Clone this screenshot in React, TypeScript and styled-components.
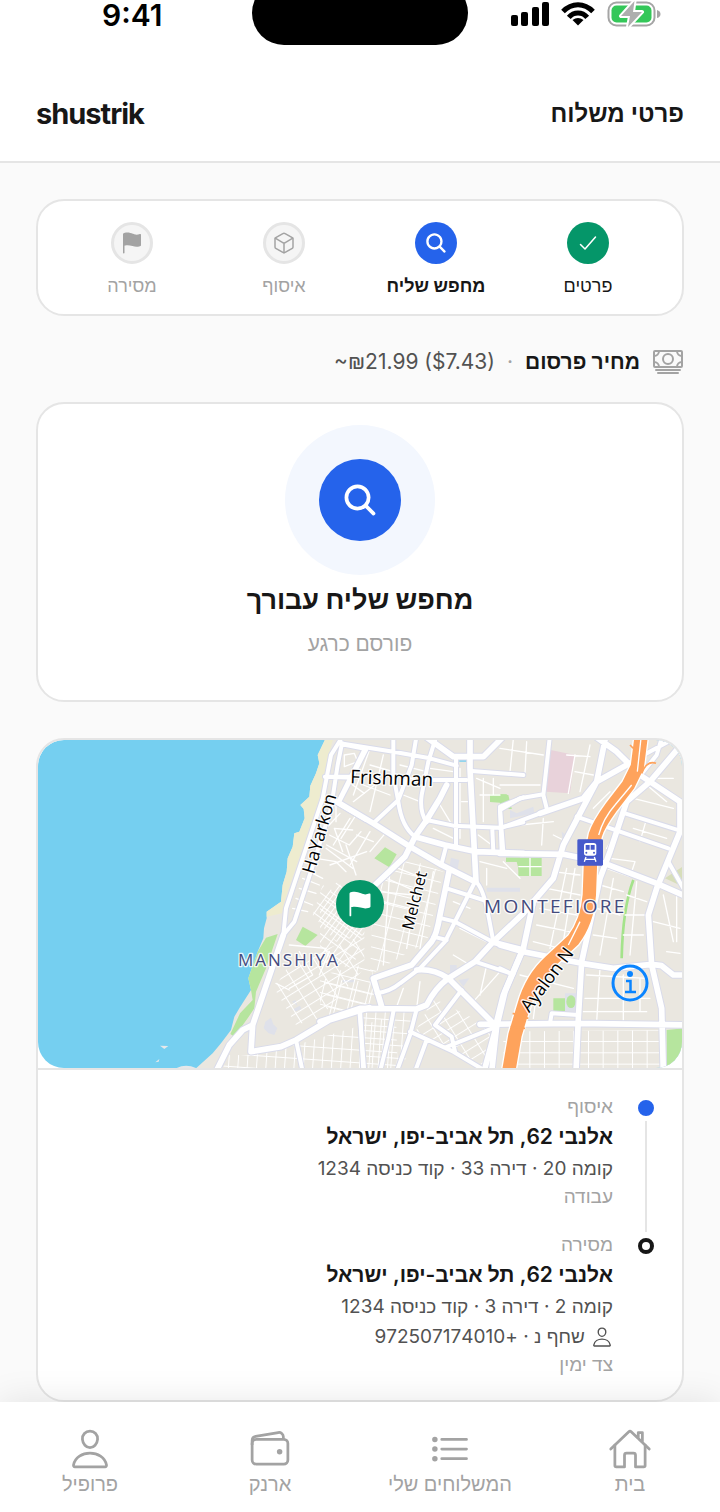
import React from "react";
import styled, { createGlobalStyle } from "styled-components";
import {
  IoCashOutline,
  IoCheckmarkOutline,
  IoCubeOutline,
  IoFlag,
  IoHomeOutline,
  IoListOutline,
  IoPersonOutline,
  IoSearch,
  IoWalletOutline,
} from "react-icons/io5";

const color = {
  ink: "#171717",
  body: "#525252",
  muted: "#a3a3a3",
  line: "#e5e5e5",
  page: "#fafafa",
  blue: "#2563eb",
  green: "#059669",
};

const GlobalStyle = createGlobalStyle`
  * { box-sizing: border-box; }
  body {
    margin: 0;
    background: ${color.page};
    color: ${color.ink};
    font-family: Inter, "Liberation Sans", "Open Sans", sans-serif;
  }
  h1, h2, p, ol, ul { margin: 0; padding: 0; }
  ol, ul { list-style: none; }
`;

const Page = styled.div`
  min-height: 100vh;
  display: flex;
  flex-direction: column;
`;

const TopBar = styled.header`
  background: #fff;
  border-bottom: 2px solid ${color.line};
`;

const StatusBar = styled.div`
  direction: ltr;
  height: 66px;
  display: grid;
  grid-template-columns: 1fr 216px 1fr;
`;

const Clock = styled.div`
  padding-left: 102px;
  font-size: 30px;
  line-height: 30px;
  font-weight: 600;
  color: #000;
`;

const Island = styled.div`
  height: 64px;
  margin-top: -19px;
  border-radius: 32px;
  background: #000;
`;

const StatusIcons = styled.div`
  height: 28px;
  display: flex;
  justify-content: flex-end;
  align-items: center;
  gap: 12px;
  padding-right: 59px;
`;

const TitleRow = styled.div`
  height: 95px;
  padding: 0 36px;
  display: flex;
  align-items: center;
  justify-content: space-between;
`;

const PageTitle = styled.h1`
  font-size: 24px;
  line-height: 34px;
  font-weight: 600;
`;

const Brand = styled.div`
  font-size: 29px;
  line-height: 36px;
  font-weight: 700;
  letter-spacing: -1px;
`;

const Main = styled.main`
  flex: 1;
  padding: 36px 36px 0;
`;

const Card = styled.section`
  background: #fff;
  border: 2px solid ${color.line};
  border-radius: 28px;
  overflow: hidden;
`;

const Steps = styled.ol`
  display: grid;
  grid-template-columns: repeat(4, 1fr);
  padding: 21px 18px 15px;
`;

type StepState = "done" | "active" | "todo";

const Step = styled.li<{ $state: StepState }>`
  display: flex;
  flex-direction: column;
  align-items: center;
  gap: 8px;
  font-size: 18px;
  line-height: 27px;
  white-space: nowrap;
  font-weight: ${(p) => (p.$state === "active" ? 600 : p.$state === "done" ? 500 : 400)};
  color: ${(p) => (p.$state === "todo" ? color.muted : color.ink)};
`;

const StepBadge = styled.span<{ $state: StepState }>`
  width: 42px;
  height: 42px;
  display: grid;
  place-items: center;
  border-radius: 50%;
  color: ${(p) => (p.$state === "todo" ? color.muted : "#fff")};
  background: ${(p) =>
    p.$state === "todo" ? "#f5f5f5" : p.$state === "active" ? color.blue : color.green};
  border: ${(p) => (p.$state === "todo" ? `3px solid ${color.line}` : "none")};
`;

const PriceRow = styled.div`
  display: flex;
  align-items: center;
  gap: 12px;
  padding: 29px 0 23px;
  font-size: 21px;
  line-height: 34px;
  color: ${color.muted};
  svg { flex: none; }
`;

const PriceLabel = styled.span`
  font-weight: 600;
  color: ${color.ink};
`;

const PriceValue = styled.span`
  color: ${color.body};
`;

const SearchPanel = styled.div`
  display: flex;
  flex-direction: column;
  align-items: center;
  padding: 21px 20px 40px;
`;

const Halo = styled.div`
  width: 150px;
  height: 150px;
  display: grid;
  place-items: center;
  border-radius: 50%;
  background: #f3f7fe;
`;

const HaloCore = styled.div`
  width: 82px;
  height: 82px;
  display: grid;
  place-items: center;
  border-radius: 50%;
  color: #fff;
  background: ${color.blue};
`;

const SearchTitle = styled.h2`
  margin-top: 6px;
  font-size: 27px;
  line-height: 38px;
  font-weight: 700;
`;

const SearchNote = styled.p`
  margin-top: 8px;
  font-size: 21px;
  line-height: 33px;
  color: ${color.muted};
`;

const Stack = styled.div`
  display: grid;
  grid-template-columns: minmax(0, 1fr);
  gap: 36px;
`;

const MapFrame = styled.div`
  position: relative;
  height: 330px;
  border-bottom: 2px solid ${color.line};
`;

const MapSvg = styled.svg`
  display: block;
  width: 100%;
  height: 328px;
  border-radius: 26px;
  direction: ltr;
`;

const Marker = styled.div`
  position: absolute;
  left: 50%;
  top: 50%;
  width: 48px;
  height: 48px;
  transform: translate(-50%, -50%);
  display: grid;
  place-items: center;
  border-radius: 50%;
  color: #fff;
  background: ${color.green};
`;

const InfoButton = styled.button`
  position: absolute;
  right: 33px;
  bottom: 66px;
  width: 38px;
  height: 38px;
  padding: 0;
  border: 0;
  background: none;
  svg { display: block; }
`;

const Route = styled.ol`
  padding: 24px 28px 22px;
`;

const Stop = styled.li`
  display: grid;
  grid-template-columns: 16px minmax(0, 1fr);
  column-gap: 25px;
`;

const Rail = styled.div`
  display: flex;
  flex-direction: column;
  align-items: center;
  gap: 5px;
  padding-top: 6px;
`;

const Dot = styled.span<{ $hollow?: boolean }>`
  width: 16px;
  height: 16px;
  border-radius: 50%;
  border: 4px solid ${(p) => (p.$hollow ? color.ink : color.blue)};
  background: ${(p) => (p.$hollow ? "#fff" : color.blue)};
`;

const RailLine = styled.span`
  flex: 1;
  width: 2px;
  background: ${color.line};
`;

const StopText = styled.div<{ $last?: boolean }>`
  padding-bottom: ${(p) => (p.$last ? 0 : 22)}px;
`;

const Small = styled.p`
  font-size: 19px;
  line-height: 26px;
  color: ${color.muted};
`;

const Address = styled.p`
  font-size: 21px;
  line-height: 34px;
  font-weight: 600;
`;

const Detail = styled.p`
  display: flex;
  align-items: center;
  gap: 6px;
  font-size: 19px;
  line-height: 30px;
  color: ${color.body};
`;

const Nav = styled.nav`
  position: sticky;
  bottom: 0;
  display: grid;
  grid-template-columns: repeat(4, 1fr);
  height: 110px;
  background: #fff;
  box-shadow: 0 0 36px rgba(0, 0, 0, 0.1);
`;

const NavLink = styled.a`
  display: flex;
  flex-direction: column;
  align-items: center;
  padding-top: 25px;
  font-size: 20px;
  line-height: 27px;
  font-weight: 500;
  white-space: nowrap;
  text-decoration: none;
  color: ${color.muted};
`;

/* The map is drawn in three side-by-side sheets that share one vertical origin. */
const sheets = {
  west: "translate(-6 -15)",
  centre: "translate(846 -15)",
  east: "translate(1386 -15)",
};

type Sheet = keyof typeof sheets;

const streets: Record<Sheet, string> = {
  west: `M915 12L885 60L860 190L750 520L742 600M918 25L905 90L885 220L818 430L775 560L742 600
    M918 28L990 42M868 125L950 128M990 45L910 200M905 205L990 255M780 915L800 1010M970 825L985 1010`,
  centre: `M60 25L220 50L330 70L410 92M135 40L55 200M15 125L100 125M340 135L440 135
    M220 0L220 120L235 200Q245 275 285 305M290 0L275 90L235 195L160 265M350 0L325 80L305 180Q298 230 320 262
    M408 65V330M455 108L610 120M320 255L400 272L540 278L610 262M545 350L540 215L610 187
    M517 285L520 350M378 335L365 385M380 460L490 495M365 550L405 560L520 622
    M340 605L380 615M465 440L400 570L375 620L300 700L240 745Q210 770 170 775
    M468 440Q490 460 505 540L520 620M465 680L580 718M530 875L375 938M425 765L345 870L395 905L405 950
    M270 890L400 950L500 1010M320 915L285 1010M120 820L130 1010M222 820L205 910L180 1010M290 822L270 900L230 1010`,
  east: `M150 0L130 180L140 220M0 225L60 190L130 178M0 280L120 235M0 225L10 350M375 235L550 290
    M230 245L360 290L505 340M505 380L550 460M0 700L30 715M0 600L100 510M150 865L155 835L235 840
    M488 0L470 60L430 110M385 85L560 -10`,
};

const avenues: Record<Sheet, string> = {
  west: `M742 600L650 870L645 950L735 935L780 915L880 855L1000 818M650 870L620 885L580 930L540 1010`,
  centre: `M50 200L160 265L270 335L365 390L465 440M310 0L400 65H490L555 0M450 0L450 100L460 290L468 440
    M380 150L360 190L320 255L285 305L255 365L165 450M285 305L375 330L470 350L610 355
    M388 405L360 540Q350 600 335 620L275 690L160 730L185 815
    M610 535L520 620L465 680L385 730Q345 760 320 810L290 822L120 820L0 860
    M290 705Q340 700 385 730L530 875M520 622L610 645M610 640L555 770L530 875L515 1010M530 870L492 1010`,
  east: `M120 235L250 190L290 140L380 90M318 0L290 140L190 330L160 430L100 500L70 640L10 780L-10 860
    M280 0L350 50L385 85M560 10L450 140L380 200L330 350L300 430L245 680L235 850L228 1010
    M420 120L540 200L540 290L470 460L445 540L455 690L485 820L490 1010M0 355L190 358L300 380L470 445L560 485
    M0 630L70 650L245 685L340 700L455 688L485 692L520 720L560 720M-60 868L230 865L560 870`,
};

const lanes: Record<Sheet, string> = {
  west: `M800 400L860 430M870 340L950 400M880 300L940 330L975 290M930 330L960 420M920 350L895 280L950 285
    M800 430L850 450M790 460L840 475M780 490L830 510M770 520L815 530M760 630L870 640M720 745L760 765M925 60V95L965 80L955 55Z
    M840 370L900 380L930 410M900 200V260M960 240L915 310M950 150L985 175M880 650L850 720M790 650L830 720L760 760`,
  centre: `M60 235L0 300M90 250L40 330M150 290L90 390M110 300L160 320M20 330L110 380M30 390L140 350M200 290L150 350
    M175 470L280 480M200 430L290 470M235 400L310 430M190 500L270 520M300 400L260 640M340 410L300 640M210 400L190 690
    M470 130L540 160M480 180H540M490 130V260M520 130V180M420 100V310M425 200H450M330 100L400 110M240 90L320 110
    M250 180L300 200M240 120L290 135M150 90L220 110M130 150L210 180M190 60L150 230M550 380L600 430M400 500L450 520
    M420 580L500 620M400 660L450 690M500 690L480 780M540 710L460 800M440 780L520 860M300 740L290 820M250 760L230 815
    M150 40L100 180M100 200L190 130M360 210L390 260M340 280L400 310M475 300L515 330M480 380L560 400M500 400V450`,
  east: `M0 40L130 60M40 12L30 110M80 20L75 115M160 300L190 315M130 250L125 330M60 270L160 260M0 150L120 150
    M200 60L270 65M225 60L205 175M270 30L240 170M225 110L280 120M280 220L330 170M400 190L520 220M440 150L500 200
    M330 370L405 380L390 425L320 400M300 450L370 470M290 520L360 540M280 600L350 610M340 430L300 660
    M410 440L390 660M380 480L440 500M375 540H435M370 600H430M460 560L540 580M490 480L520 620M530 480V620
    M160 410L240 420M140 460L240 480M120 520L230 540M110 570L210 590M100 620L180 640M200 400L150 640M225 400L190 620
    M260 720L440 730M255 790H450M250 830H440M300 700L290 860M370 720V860M420 730V830M60 720L220 760M120 700L100 850
    M500 650L540 655M400 280L500 310M440 250L420 320M470 130L520 130M350 290L320 340`,
};

const wards: { sheet: Sheet; points: string; fill: string }[] = [
  { sheet: "west", points: "860,450 985,520 985,600 900,620 830,540", fill: "grid40" },
  { sheet: "west", points: "715,760 765,680 985,600 985,700 850,850 780,870", fill: "grid60" },
  { sheet: "west", points: "860,720 1010,680 1010,810 880,850", fill: "grid15" },
  { sheet: "west", points: "580,960 650,960 780,930 1080,840 1085,1000 560,1000", fill: "grid5" },
  { sheet: "centre", points: "0,520 50,440 150,520 100,700 0,680", fill: "grid40" },
  { sheet: "centre", points: "160,460 260,370 370,410 320,620 150,720", fill: "grid15" },
  { sheet: "centre", points: "0,730 150,740 180,810 0,840", fill: "grid15" },
  { sheet: "centre", points: "125,830 290,830 250,1000 130,1000", fill: "grid5" },
  { sheet: "centre", points: "280,900 340,790 520,880 490,990", fill: "grid60" },
  { sheet: "east", points: "10,890 480,885 480,1000 10,1000", fill: "grid0" },
];

const grids = [
  { id: "grid0", w: 44, h: 34, turn: 0 },
  { id: "grid5", w: 28, h: 38, turn: 4 },
  { id: "grid15", w: 48, h: 34, turn: 14 },
  { id: "grid40", w: 26, h: 30, turn: 36 },
  { id: "grid60", w: 28, h: 44, turn: 58 },
];

const highway =
  "M424 0L412 95L385 150L335 215Q295 270 286 300L272 370L268 480Q262 560 220 615L150 680Q95 730 72 810L45 900L26 1010";

const sheetNames = Object.keys(sheets) as Sheet[];

function RoadLayer({ paths, width, stroke }: { paths: Record<Sheet, string>; width: number; stroke: string }) {
  return (
    <g fill="none" stroke={stroke} strokeWidth={width} strokeLinejoin="round" strokeLinecap="round">
      {sheetNames.map((name) => (
        <path key={name} d={paths[name]} transform={sheets[name]} />
      ))}
    </g>
  );
}

function CityMap() {
  return (
    <MapSvg viewBox="0 0 1932 984" preserveAspectRatio="xMidYMid slice" role="img" aria-label="Tel Aviv">
      <defs>
        {grids.map((g) => (
          <pattern
            key={g.id}
            id={g.id}
            width={g.w}
            height={g.h}
            patternUnits="userSpaceOnUse"
            patternTransform={`rotate(${g.turn})`}
          >
            <path d={`M0 1H${g.w}M1 0V${g.h}`} stroke="#fff" strokeWidth="4" />
          </pattern>
        ))}
      </defs>
      <rect width="1932" height="984" fill="#75cff0" />
      <g transform={sheets.west}>
        <path
          d="M868 0L868 12L845 60L850 85L840 115L823 152L820 185L793 210L803 222L806 250L790 290L775 295L770 335L755 370L752 410L740 450L735 500L692 530L692 550L684 580L682 610L665 650L637 730L645 765L610 820L595 845L585 885L555 925L530 955L480 1000H2000V0Z"
          fill="#eae7e0"
        />
        <path
          d="M868 0L868 12L845 60L850 85L840 115L823 152L820 185L793 210L803 222L806 250L790 290L775 295L770 335L755 370L752 410L740 450L735 500L692 530L692 545L738 535L745 500L850 190L875 70L895 0Z"
          fill="#eeeccf"
        />
        <g fill="#b6e59e">
          <path d="M800 575L845 600L808 633L780 615Z" />
          <path d="M690 608L725 597L690 700L660 770L655 820L635 850L595 905L583 897L612 835L650 795L645 765L637 730L665 650Z" />
        </g>
        <path
          d="M688 860L705 848L712 868L724 880L715 900L698 895L683 880ZM920 735H955V742H920ZM768 800L778 795L784 812ZM772 822L792 812L796 822L776 830Z"
          fill="#dfe1ea"
        />
        <path d="M372 932L397 933L385 942ZM358 982L370 972L368 980ZM420 1000Q450 985 482 1000Z" fill="#e6e8ea" />
      </g>
      <g transform={sheets.centre}>
        <path d="M195 337L230 358L208 397L163 370ZM510 178L560 178L575 222L545 222L540 203L510 201ZM558 368H600V420L590 380H558Z" fill="#b6e59e" />
        <path d="M418 73H440V80H418Z" fill="#75cff0" />
        <path d="M393 368L418 375L412 405L388 397ZM500 458H600V470H500ZM390 690H410V715H390ZM415 735L448 730L430 755Z" fill="#dfe1ea" />
      </g>
      <g transform={sheets.east}>
        <path d="M152 45L225 60L210 175L138 170Z" fill="#e8d2da" />
        <path d="M495 430L548 395V455Z" fill="#d7deba" />
        <path d="M30 225L50 235L100 215L103 235L30 250ZM195 775H232V830H195ZM185 290L205 305L190 340Z" fill="#dfe1ea" />
        <g fill="#b6e59e">
          <path d="M0 178L25 180L35 222L0 210ZM18 368H125V423H55V380H18ZM160 790H195V828H160ZM500 885L550 880V1000H500Z" />
          <ellipse cx="213" cy="800" rx="14" ry="19" />
          <path d="M400 435Q368 520 365 670" fill="none" stroke="#a4e38b" strokeWidth="8" />
        </g>
        <path d="M55 395H125M90 368V423" stroke="#fff" strokeWidth="4" />
      </g>
      {wards.map((w) => (
        <polygon key={w.sheet + w.points} points={w.points} fill={`url(#${w.fill})`} transform={sheets[w.sheet]} />
      ))}
      <RoadLayer paths={lanes} width={4} stroke="#fff" />
      <RoadLayer paths={streets} width={18} stroke="#d9dbea" />
      <RoadLayer paths={avenues} width={23} stroke="#d9dbea" />
      <RoadLayer paths={streets} width={12} stroke="#fff" />
      <RoadLayer paths={avenues} width={17} stroke="#fff" />
      <g transform={sheets.east} fill="none">
        <path d={highway} stroke="#fff" strokeWidth="48" />
        <path d={highway} stroke="#fea35c" strokeWidth="40" />
        <path d="M424 0L412 110M395 150L345 210Q310 250 296 300M240 560L205 630" stroke="#fff" strokeWidth="4" />
        <path d="M425 115Q440 75 468 85M390 30L405 45M38 835L85 850M32 875L75 880" stroke="#fea35c" strokeWidth="5" />
      </g>
      <g
        fontFamily='"Open Sans", "Noto Sans", sans-serif'
        paintOrder="stroke"
        stroke="#fff"
        strokeOpacity="0.85"
        strokeWidth="8"
        strokeLinejoin="round"
      >
        <g fill="#000" fontSize="54">
          <text transform="translate(936 130) rotate(2)" fontSize="57">Frishman</text>
          <text transform="translate(828 404) rotate(-74)">HaYarkon</text>
          <text transform="translate(1124 572) rotate(-76)" fontSize="48">Melchet</text>
          <text transform="translate(1474 820) rotate(-53)">Ayalon N</text>
        </g>
        <g fill="#454b7d" fontSize="51" letterSpacing="6">
          <text x="600" y="678">MANSHIYA</text>
          <text x="1338" y="518" fontSize="57" letterSpacing="7">MONTEFIORE</text>
        </g>
      </g>
      <g transform={sheets.east}>
        <rect x="232" y="313" width="77" height="79" rx="4" fill="#465acb" />
        <rect x="252" y="324" width="37" height="38" rx="8" fill="#fff" />
        <path d="M257 330H269V344H257ZM272 330H284V344H272Z" fill="#465acb" />
        <circle cx="259" cy="353" r="3" fill="#465acb" />
        <circle cx="282" cy="353" r="3" fill="#465acb" />
        <path d="M258 366L253 380M283 366L288 380M257 373H284" stroke="#fff" strokeWidth="4" />
      </g>
    </MapSvg>
  );
}

function SignalIcon() {
  return (
    <svg width="38" height="24" viewBox="0 0 38 24">
      <rect x="0" y="13" width="7" height="11" rx="2" />
      <rect x="10" y="10" width="7" height="14" rx="2" />
      <rect x="21" y="5" width="7" height="19" rx="2" />
      <rect x="31" y="0" width="7" height="24" rx="2" />
    </svg>
  );
}

function WifiIcon() {
  return (
    <svg width="34" height="24" viewBox="0 0 34 24">
      <g fill="none" stroke="#000" strokeWidth="5">
        <path d="M2 9.500Q8.500 2.700 17 2.700T32 9.500" />
        <path d="M7.800 15.300Q11.500 11 17 11T26.200 15.300" />
      </g>
      <path d="M17 23.500L11.500 18Q17 14 22.500 18Z" />
    </svg>
  );
}

function BatteryIcon() {
  return (
    <svg width="54" height="28" viewBox="0 0 54 28">
      <rect x="1.500" y="2.500" width="46" height="23" rx="8" fill="none" stroke="#a5a5a5" strokeWidth="2" />
      <rect x="4.500" y="5.500" width="40" height="17" rx="5" fill="#34c759" />
      <path d="M50 10Q53.500 11 53.500 14T50 18Z" fill="#a5a5a5" />
      <path d="M27.500 1L14 16H23L21 27L35 12H26Z" fill="#aeaeae" stroke="#fff" strokeWidth="4" strokeLinejoin="round" paintOrder="stroke" />
    </svg>
  );
}

function InfoIcon() {
  return (
    <svg width="38" height="38" viewBox="0 0 38 38" fill="none" stroke="#0a84ff">
      <circle cx="19" cy="19" r="17" strokeWidth="3" />
      <circle cx="19" cy="10" r="3" fill="#0a84ff" stroke="none" />
      <path d="M15 17H19.500V28M14 28H25" strokeWidth="2.500" />
    </svg>
  );
}

const steps: { label: string; state: StepState; icon: React.ReactNode }[] = [
  { label: "פרטים", state: "done", icon: <IoCheckmarkOutline size={24} /> },
  { label: "מחפש שליח", state: "active", icon: <IoSearch size={24} /> },
  { label: "איסוף", state: "todo", icon: <IoCubeOutline size={24} /> },
  { label: "מסירה", state: "todo", icon: <IoFlag size={24} /> },
];

const links = [
  { label: "בית", icon: <IoHomeOutline size={44} /> },
  { label: "המשלוחים שלי", icon: <IoListOutline size={44} /> },
  { label: "ארנק", icon: <IoWalletOutline size={44} /> },
  { label: "פרופיל", icon: <IoPersonOutline size={44} /> },
];

export default function App() {
  return (
    <Page dir="rtl" lang="he">
      <GlobalStyle />
      <TopBar>
        <StatusBar>
          <Clock>9:41</Clock>
          <Island />
          <StatusIcons>
            <SignalIcon />
            <WifiIcon />
            <BatteryIcon />
          </StatusIcons>
        </StatusBar>
        <TitleRow>
          <PageTitle>פרטי משלוח</PageTitle>
          <Brand>shustrik</Brand>
        </TitleRow>
      </TopBar>
      <Main>
        <Card>
          <Steps>
            {steps.map((s) => (
              <Step key={s.label} $state={s.state}>
                <StepBadge $state={s.state}>{s.icon}</StepBadge>
                {s.label}
              </Step>
            ))}
          </Steps>
        </Card>
        <PriceRow>
          <IoCashOutline size={32} />
          <PriceLabel>מחיר פרסום</PriceLabel>
          <span>·</span>
          <PriceValue dir="ltr">~₪21.99 ($7.43)</PriceValue>
        </PriceRow>
        <Stack>
          <Card>
            <SearchPanel>
              <Halo>
                <HaloCore>
                  <IoSearch size={38} />
                </HaloCore>
              </Halo>
              <SearchTitle>מחפש שליח עבורך</SearchTitle>
              <SearchNote>פורסם כרגע</SearchNote>
            </SearchPanel>
          </Card>
          <Card>
            <MapFrame>
              <CityMap />
              <Marker>
                <IoFlag size={28} />
              </Marker>
              <InfoButton type="button" aria-label="Info">
                <InfoIcon />
              </InfoButton>
            </MapFrame>
            <Route>
              <Stop>
                <Rail>
                  <Dot />
                  <RailLine />
                </Rail>
                <StopText>
                  <Small>איסוף</Small>
                  <Address>אלנבי 62, תל אביב-יפו, ישראל</Address>
                  <Detail>קומה 20 · דירה 33 · קוד כניסה 1234</Detail>
                  <Small>עבודה</Small>
                </StopText>
              </Stop>
              <Stop>
                <Rail>
                  <Dot $hollow />
                </Rail>
                <StopText $last>
                  <Small>מסירה</Small>
                  <Address>אלנבי 62, תל אביב-יפו, ישראל</Address>
                  <Detail>קומה 2 · דירה 3 · קוד כניסה 1234</Detail>
                  <Detail>
                    <IoPersonOutline size={22} />
                    <span>
                      שחף נ · <bdi dir="rtl">+972507174010</bdi>
                    </span>
                  </Detail>
                  <Small>צד ימין</Small>
                </StopText>
              </Stop>
            </Route>
          </Card>
        </Stack>
      </Main>
      <Nav>
        {links.map((l) => (
          <NavLink key={l.label} href="#">
            {l.icon}
            {l.label}
          </NavLink>
        ))}
      </Nav>
    </Page>
  );
}
